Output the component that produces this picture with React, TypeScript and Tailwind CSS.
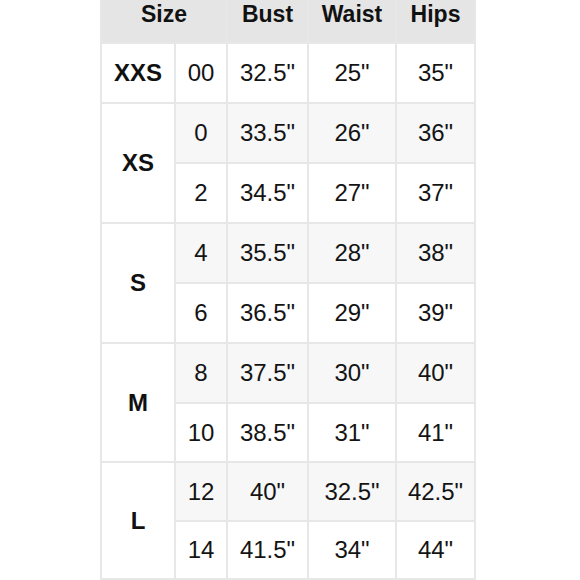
import React from 'react';

type Row = { num: string; bust: string; waist: string; hips: string; h: string };
type Group = { size: string; rows: Row[] };

const groups: Group[] = [
    { size: 'XXS', rows: [{ num: '00', bust: '32.5"', waist: '25"', hips: '35"', h: 'h-[58px]' }] },
    {
        size: 'XS',
        rows: [
            { num: '0', bust: '33.5"', waist: '26"', hips: '36"', h: 'h-[58px]' },
            { num: '2', bust: '34.5"', waist: '27"', hips: '37"', h: 'h-[58px]' },
        ],
    },
    {
        size: 'S',
        rows: [
            { num: '4', bust: '35.5"', waist: '28"', hips: '38"', h: 'h-[58px]' },
            { num: '6', bust: '36.5"', waist: '29"', hips: '39"', h: 'h-[58px]' },
        ],
    },
    {
        size: 'M',
        rows: [
            { num: '8', bust: '37.5"', waist: '30"', hips: '40"', h: 'h-[58px]' },
            { num: '10', bust: '38.5"', waist: '31"', hips: '41"', h: 'h-[57px]' },
        ],
    },
    {
        size: 'L',
        rows: [
            { num: '12', bust: '40"', waist: '32.5"', hips: '42.5"', h: 'h-[57px]' },
            { num: '14', bust: '41.5"', waist: '34"', hips: '44"', h: 'h-[56px]' },
        ],
    },
];

const cell = 'flex items-center justify-center text-[24px] text-[#141414]';
const head = 'bg-[#e5e5e5] flex justify-center text-[23px] font-bold leading-[28px] text-[#111]';

export default function App() {
    return (
        <div className="w-[580px] h-[580px] bg-white overflow-hidden font-['Liberation_Sans',Arial,sans-serif]">
            <div className="ml-[100px] w-[376px] flex flex-col gap-[2px] px-[2px] pb-[2px] bg-[#e7e7e7]">
                <div className="h-[42px] grid grid-cols-[124px_79px_86px_77px] gap-[2px]">
                    <div className={head}>Size</div>
                    <div className={head}>Bust</div>
                    <div className={head}>Waist</div>
                    <div className={head}>Hips</div>
                </div>

                {groups.map((g) => {
                    const multi = g.rows.length > 1;
                    return (
                        <div key={g.size} className="flex gap-[2px]">
                            <div className="w-[72px] bg-white flex items-center justify-center text-[24px] font-bold text-[#111]">
                                {g.size}
                            </div>
                            <div className="flex flex-col gap-[2px]">
                                {g.rows.map((r, i) => {
                                    const bg = multi && i === 0 ? 'bg-[#f7f7f7]' : 'bg-white';
                                    return (
                                        <div key={r.num} className={`${r.h} grid grid-cols-[50px_79px_86px_77px] gap-[2px]`}>
                                            <div className={`${cell} ${bg}`}>{r.num}</div>
                                            <div className={`${cell} ${bg}`}>{r.bust}</div>
                                            <div className={`${cell} ${bg}`}>{r.waist}</div>
                                            <div className={`${cell} ${bg}`}>{r.hips}</div>
                                        </div>
                                    );
                                })}
                            </div>
                        </div>
                    );
                })}
            </div>
        </div>
    );
}
